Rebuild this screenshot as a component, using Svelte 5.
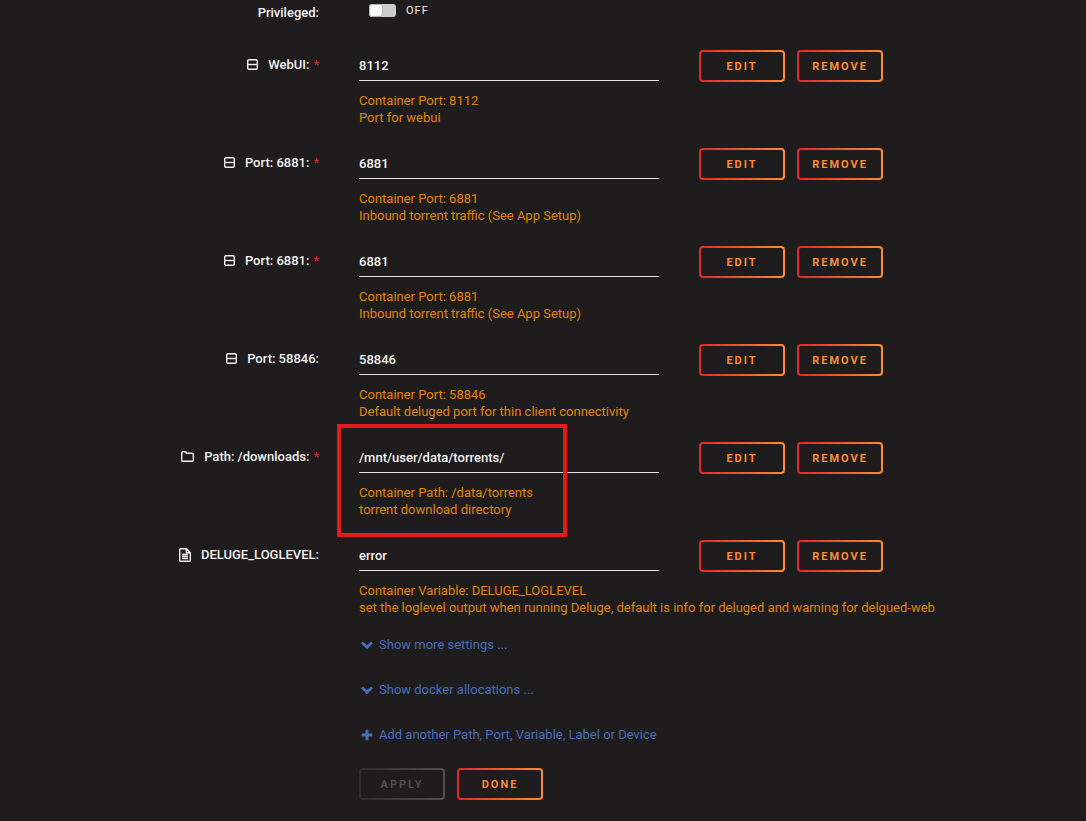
<script lang="ts">
  type Setting = {
    id: string;
    kind: 'port' | 'path' | 'variable';
    label: string;
    required: boolean;
    value: string;
    help: string[];
    marked?: boolean;
  };

  let privileged = $state(false);
  let settings: Setting[] = $state([
    {
      id: 'webui',
      kind: 'port',
      label: 'WebUI:',
      required: true,
      value: '8112',
      help: ['Container Port: 8112', 'Port for webui'],
    },
    {
      id: 'port-tcp',
      kind: 'port',
      label: 'Port: 6881:',
      required: true,
      value: '6881',
      help: ['Container Port: 6881', 'Inbound torrent traffic (See App Setup)'],
    },
    {
      id: 'port-udp',
      kind: 'port',
      label: 'Port: 6881:',
      required: true,
      value: '6881',
      help: ['Container Port: 6881', 'Inbound torrent traffic (See App Setup)'],
    },
    {
      id: 'port-thin',
      kind: 'port',
      label: 'Port: 58846:',
      required: false,
      value: '58846',
      help: ['Container Port: 58846', 'Default deluged port for thin client connectivity'],
    },
    {
      id: 'downloads',
      kind: 'path',
      label: 'Path: /downloads:',
      required: true,
      value: '/mnt/user/data/torrents/',
      help: ['Container Path: /data/torrents', 'torrent download directory'],
      marked: true,
    },
    {
      id: 'loglevel',
      kind: 'variable',
      label: 'DELUGE_LOGLEVEL:',
      required: false,
      value: 'error',
      help: [
        'Container Variable: DELUGE_LOGLEVEL',
        'set the loglevel output when running Deluge, default is info for deluged and warning for delgued-web',
      ],
    },
  ]);

  const links = [
    { icon: 'chevron', text: 'Show more settings ...' },
    { icon: 'chevron', text: 'Show docker allocations ...' },
    { icon: 'plus', text: 'Add another Path, Port, Variable, Label or Device' },
  ];

  function remove(id: string) {
    settings = settings.filter((s) => s.id !== id);
  }
</script>

<form onsubmit={(e) => e.preventDefault()}>
  <div class="row privileged">
    <label class="name" for="privileged">Privileged:</label>
    <div class="switch">
      <input id="privileged" type="checkbox" bind:checked={privileged} />
      <span>{privileged ? 'ON' : 'OFF'}</span>
    </div>
  </div>

  {#each settings as setting (setting.id)}
    <div class="row">
      <label class="name" for={setting.id}>
        {#if setting.kind === 'port'}
          <svg class="icon" width="11" height="11" viewBox="0 0 11 11" aria-hidden="true">
            <rect x="0.7" y="0.7" width="9.6" height="9.6" rx="1.3" />
            <path d="M1 5.5h9" />
          </svg>
        {:else if setting.kind === 'path'}
          <svg class="icon" width="13" height="11" viewBox="0 0 13 11" aria-hidden="true">
            <path d="M.7 2Q.7.7 2 .7h2.2q1.2 0 1.2 1.2v.3H11q1.3 0 1.3 1.3V9q0 1.3-1.3 1.3H2Q.7 10.3.7 9z" />
          </svg>
        {:else}
          <svg class="icon" width="12" height="14" viewBox="0 0 12 14" aria-hidden="true">
            <path d="M.7 1.5q0-.8.8-.8h6L11.3 4.500v8q0 .8-.8.8h-9q-.8 0-.8-.8zM7.300.9v3.800h3.800M3 6.500h6M3 8.500h6M3 10.500h6" />
          </svg>
        {/if}
        <span>{setting.label}</span>
        {#if setting.required}<span class="required">*</span>{/if}
      </label>
      <div class="field">
        <input id={setting.id} class="value" type="text" bind:value={setting.value} />
        <div class="help">
          {#each setting.help as line}
            <div>{line}</div>
          {/each}
        </div>
        {#if setting.marked}<div class="marker"></div>{/if}
      </div>
      <div class="actions">
        <button type="button">Edit</button>
        <button type="button" onclick={() => remove(setting.id)}>Remove</button>
      </div>
    </div>
  {/each}

  <div class="row">
    <div class="footer">
      {#each links as link}
        <a href="#settings">
          <svg width="12" height="12" viewBox="0 0 12 12" aria-hidden="true">
            {#if link.icon === 'chevron'}
              <path d="M0 4.300 1.900 2.400 6 6.300l4.100-3.900L12 4.300 6 10.200z" />
            {:else}
              <path d="M4.500.7h3v3.800h3.800v3H7.500v3.800h-3V7.500H.7v-3h3.800z" />
            {/if}
          </svg>
          {link.text}
        </a>
      {/each}
      <div class="submit">
        <button type="button" disabled>Apply</button>
        <button type="submit">Done</button>
      </div>
    </div>
  </div>
</form>

<style>
  :global(body) {
    background: #1e1c1d;
  }

  form {
    box-sizing: border-box;
    padding-top: 2px;
    border-bottom: 2px solid #171516;
    color: #f2f2f2;
    font-family: Roboto, 'Noto Sans', sans-serif;
    font-size: 13px;
    line-height: 17px;
  }

  .row {
    display: grid;
    grid-template-columns: minmax(200px, 319px) 300px auto;
    column-gap: 40px;
    margin-bottom: 22px;
  }

  .row.privileged {
    margin-bottom: 29px;
  }

  .name {
    display: flex;
    align-items: center;
    justify-content: flex-end;
    height: 17px;
    margin-top: 6px;
    font-weight: 500;
    white-space: nowrap;
  }

  .privileged .name {
    margin-top: 2px;
  }

  .icon {
    margin-right: 10px;
    fill: none;
    stroke: currentColor;
    stroke-width: 1.4;
  }

  .required {
    margin-left: 4px;
    color: #e22828;
    font-weight: 400;
  }

  .switch {
    display: flex;
    align-items: center;
    gap: 10px;
    height: 17px;
    margin-left: 10px;
    font-size: 11px;
    letter-spacing: 1px;
  }

  .switch input {
    appearance: none;
    width: 27px;
    height: 13px;
    margin: 0;
    border-radius: 3px;
    background: #cccccc;
  }

  .switch input::before {
    content: '';
    display: block;
    box-sizing: border-box;
    width: 14px;
    height: 13px;
    border: 1px solid #b4b4b4;
    border-radius: 3px;
    background: #fafafa;
  }

  .switch input:checked {
    background: #ff8c2f;
  }

  .switch input:checked::before {
    margin-left: auto;
  }

  .field {
    position: relative;
  }

  .value {
    display: block;
    box-sizing: border-box;
    width: 100%;
    height: 31px;
    padding: 0;
    border: 0;
    border-bottom: 1px solid #e2e2e2;
    background: none;
    color: inherit;
    font: inherit;
    font-weight: 500;
    outline: none;
  }

  .help {
    margin-top: 11px;
    color: #e08400;
    white-space: nowrap;
  }

  /* callout frame around the path mapping */
  .marker {
    position: absolute;
    top: -18px;
    left: -22px;
    box-sizing: border-box;
    width: 230px;
    height: 113px;
    border: 4px solid #e51a1b;
    pointer-events: none;
  }

  .actions,
  .submit {
    display: flex;
    align-items: flex-start;
    gap: 12px;
  }

  button {
    box-sizing: border-box;
    min-width: 86px;
    height: 32px;
    padding: 0 12px;
    border: 2px solid transparent;
    border-radius: 4px;
    background:
      linear-gradient(#1e1c1d, #1e1c1d) padding-box,
      linear-gradient(90deg, #e22828, #ff8c2f) border-box;
    color: #ff8c2f;
    font-family: inherit;
    font-size: 11px;
    font-weight: 700;
    letter-spacing: 2px;
    text-transform: uppercase;
    cursor: pointer;
  }

  button:disabled {
    background:
      linear-gradient(#1e1c1d, #1e1c1d) padding-box,
      linear-gradient(90deg, #2b2b2b, #4f4f4f) border-box;
    color: #4f4f4f;
    cursor: default;
  }

  .footer {
    grid-column: 2 / -1;
    display: flex;
    flex-direction: column;
    align-items: flex-start;
    gap: 28px;
    margin-top: -2px;
  }

  .footer a {
    display: flex;
    align-items: center;
    gap: 6px;
    margin-left: 2px;
    color: #486dba;
    text-decoration: none;
  }

  .footer svg {
    fill: currentColor;
  }

  .submit {
    margin-top: -3px;
  }
</style>
